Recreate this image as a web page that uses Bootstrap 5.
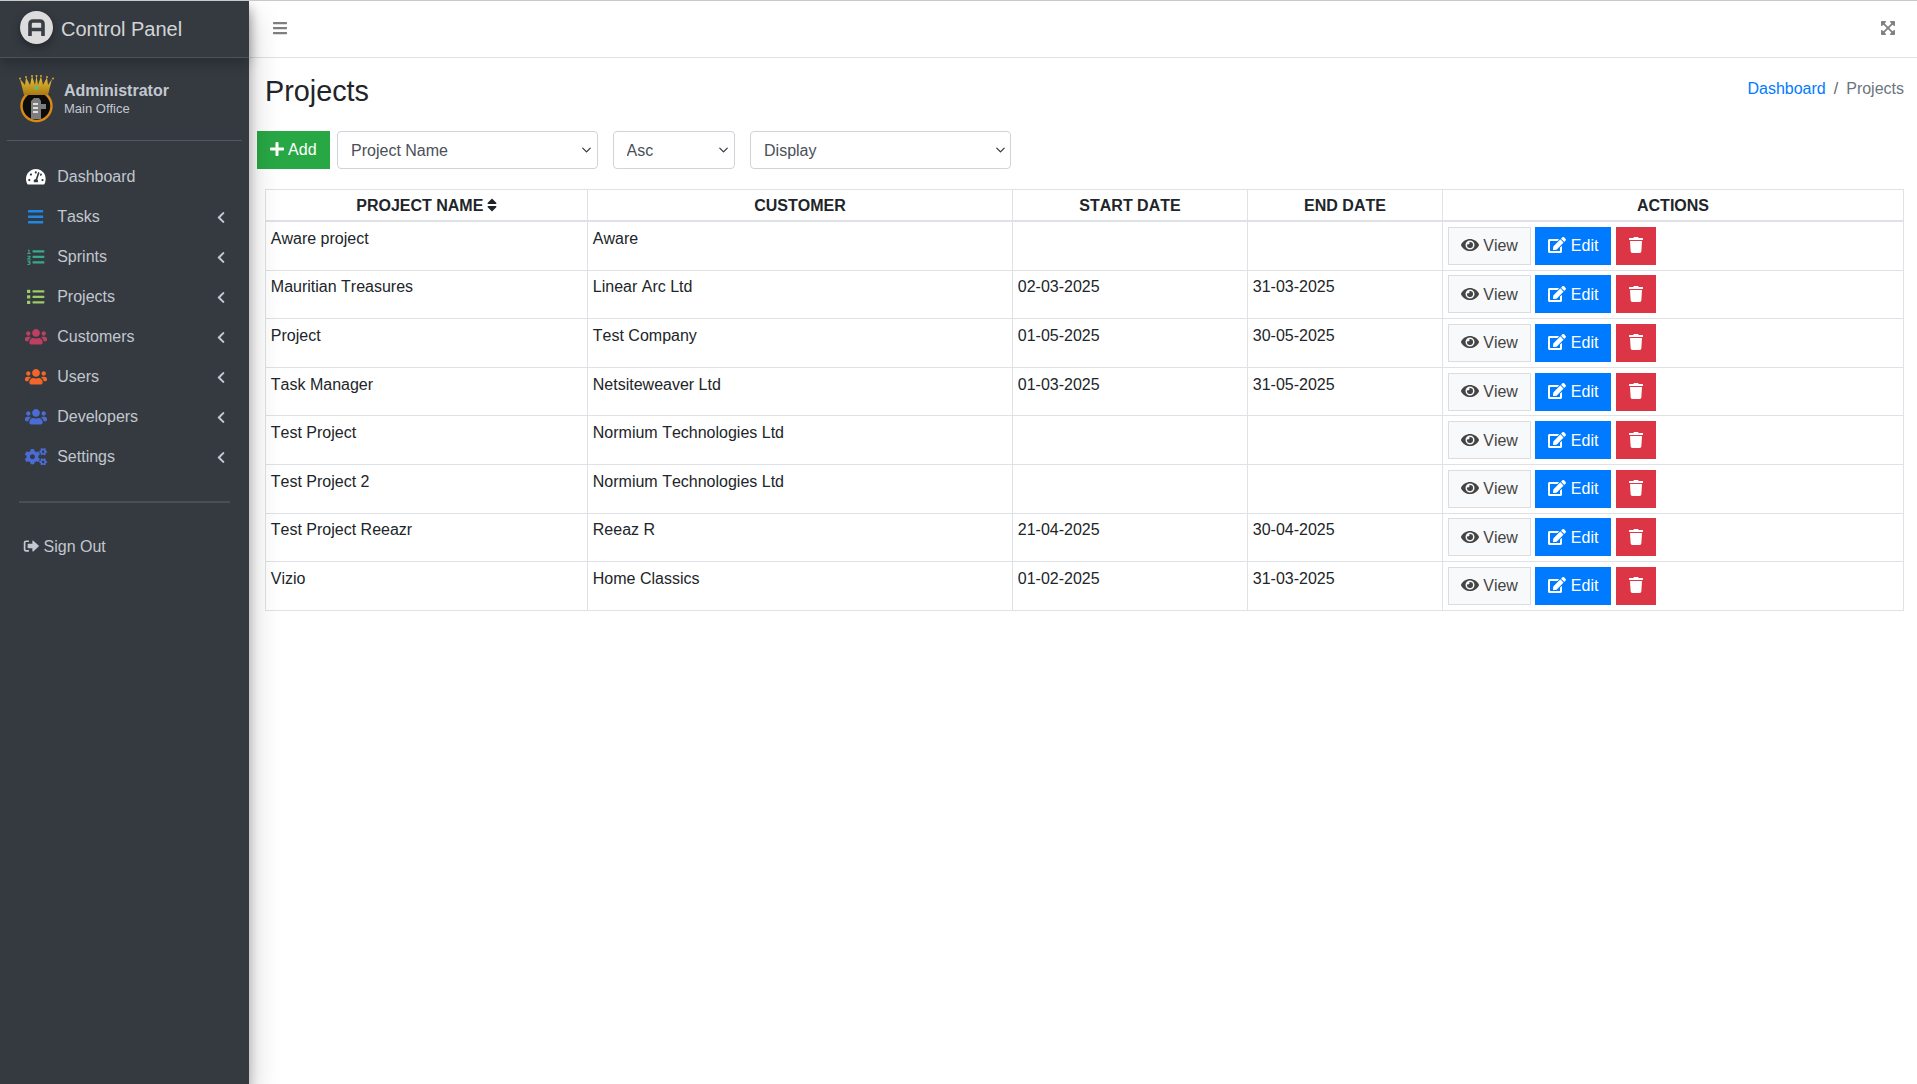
<!DOCTYPE html>
<html lang="en">
<head>
    <meta charset="UTF-8">
    <title>Projects</title>
    <link href="https://cdn.jsdelivr.net/npm/bootstrap@5.3.0/dist/css/bootstrap.min.css" rel="stylesheet">
    <style>
        body {
            font-family: "Liberation Sans", Arial, sans-serif;
            font-size: 16px;
            font-kerning: none;
            color: #212529;
            background: #fff;
            border-top: 1px solid #c9c9c9;
        }
        .ico { height: 1em; fill: currentColor; vertical-align: -.125em; }
        .w320 { width: .625em; }
        .w448 { width: .875em; }
        .w512 { width: 1em; }
        .w576 { width: 1.125em; }
        .w640 { width: 1.25em; }
        .page-shell { height: 1083px; overflow: hidden; }
        .side-panel {
            width: 249px;
            flex: 0 0 249px;
            background: #343a40;
            box-shadow: 0 14px 28px rgba(0,0,0,.25), 0 10px 10px rgba(0,0,0,.22);
            color: #c2c7d0;
            position: relative;
            z-index: 2;
        }
        .side-brand {
            height: 57px;
            border-bottom: 1px solid #4b545c;
            box-shadow: 0 6px 12px rgba(0,0,0,.22);
            padding-left: 20px;
            gap: 8px;
            color: rgba(255,255,255,.8);
            font-size: 20px;
            font-weight: 300;
        }
        .brand-logo { filter: drop-shadow(0 3px 4px rgba(0,0,0,.35)); margin-top: -3px; }
        .side-user {
            margin: 0 7px;
            height: 83px;
            border-bottom: 1px solid #4f5962;
            padding-left: 12px;
            gap: 10px;
        }
        .user-name { font-weight: 700; line-height: 20px; margin-top: -1px; }
        .user-place { font-size: 13px; line-height: 16px; }
        .side-nav { padding-top: 16px; }
        .side-nav .nav-link {
            height: 40px;
            padding: 0 23.5px 0 23px;
            color: #c2c7d0;
        }
        .nav-glyph { width: 26px; margin-right: 8.2px; text-align: center; font-size: 17.6px; line-height: 1; }
        .nav-caret { margin-left: auto; font-size: 13px; color: #c2c7d0; }
        .glyph-white { color: #fff; }
        .glyph-blue { color: #1e88e5; }
        .glyph-teal { color: #39a98a; }
        .glyph-lime { color: #9ccc65; }
        .glyph-rose { color: #bf3f62; }
        .glyph-orange { color: #f4652a; }
        .glyph-indigo { color: #4a6cd4; }
        .side-rule { height: 2px; background: #4b4f54; margin: 24px 19px 0 19px; }
        .side-out { padding: 32px 0 0 23px; color: #c2c7d0; line-height: 24px; }
        .side-out svg { margin-right: 4.5px; }
        .top-bar { height: 57px; border-bottom: 1px solid #dee2e6; padding: 0 22px 2px 24px; }
        .bar-toggle { color: rgba(0,0,0,.5); font-size: 16px; }
        .bar-expand { color: #808080; font-size: 16px; }
        .page-wrap { padding: 0 5.5px 0 8.5px; }
        .page-head { padding: 15.5px 7.5px 0; height: 73px; }
        .page-title { font-size: 28.8px; line-height: 1.2; font-weight: 400; margin: 0; }
        .crumbs { margin: 3px 0 0; padding: 0; }
        .crumbs a { color: #007bff; text-decoration: none; }
        .crumbs .breadcrumb-item.active { color: #6c757d; }
        .tool-row { height: 38px; margin-bottom: 20px; }
        .tool-add { margin-left: -1px; }
        .tool-add svg { margin-right: 1px; }
        .form-select.pick {
            height: 38px;
            padding: 7px 24px 5px 13px;
            font-size: 16px;
            color: #495057;
            border-color: #ced4da;
            border-radius: 4px;
            background-position: right 3.5px center;
            background-size: 13px 10px;
        }
        .pick-wide { width: 260.5px; margin-left: 7.5px; }
        .pick-small { width: 122px; margin-left: 15px; }
        .pick-last { width: 261px; margin-left: 15.5px; }
        .btn.sq { border-radius: 0; }
        .btn-success { --bs-btn-bg: #28a745; --bs-btn-border-color: #28a745; }
        .btn-primary { --bs-btn-bg: #007bff; --bs-btn-border-color: #007bff; }
        .btn-danger { --bs-btn-bg: #dc3545; --bs-btn-border-color: #dc3545; }
        .btn-light { --bs-btn-bg: #f8f9fa; --bs-btn-border-color: #ddd; --bs-btn-color: #444; }
        .tbl-wrap { padding: 0 7.5px; }
        .proj-table { table-layout: fixed; margin: 0; --bs-table-color: #212529; border-color: #dee2e6; }
        .proj-table th { padding: 4px 5px 2px; text-align: center; text-transform: uppercase; border-bottom: 2px solid #dee2e6; }
        .proj-table td { padding: 4.8px; vertical-align: top; }
        .proj-table th svg { margin-left: -1px; }
        .proj-table .btn { padding-top: 6.5px; padding-bottom: 5.5px; }
        .col-name { width: 322px; }
        .col-customer { width: 425px; }
        .col-start { width: 235px; }
        .col-end { width: 195px; }
    </style>
</head>
<body>
<svg width="0" height="0" class="position-absolute">
    <symbol id="i-gauge" viewBox="0 0 576 512"><path d="M288 32C128.94 32 0 160.94 0 320c0 52.8 14.25 102.26 39.06 144.8 5.61 9.62 16.3 15.2 27.44 15.2h443c11.14 0 21.83-5.58 27.44-15.2C561.75 422.26 576 372.8 576 320c0-159.06-128.94-288-288-288zm0 64c14.71 0 26.58 10.13 30.32 23.65-1.11 2.26-2.64 4.23-3.45 6.67l-9.22 27.67c-5.13 3.49-10.97 6.01-17.64 6.01-17.67 0-32-14.33-32-32S270.33 96 288 96zM96 384c-17.67 0-32-14.33-32-32s14.33-32 32-32 32 14.33 32 32-14.33 32-32 32zm48-160c-17.67 0-32-14.33-32-32s14.33-32 32-32 32 14.33 32 32-14.33 32-32 32zm246.77-72.41l-61.33 184C343.13 347.33 352 364.54 352 384c0 11.72-3.38 22.55-8.88 32H232.88c-5.5-9.45-8.88-20.28-8.88-32 0-33.94 26.5-61.43 59.9-63.59l61.34-184.01c4.17-12.56 17.73-19.45 30.36-15.17 12.57 4.19 19.35 17.79 15.17 30.36zm14.66 57.2l15.52-46.55c3.47-1.29 7.13-2.23 11.05-2.23 17.67 0 32 14.33 32 32s-14.33 32-32 32c-11.38-.01-20.89-6.28-26.57-15.22zM480 384c-17.67 0-32-14.33-32-32s14.33-32 32-32 32 14.33 32 32-14.33 32-32 32z"/></symbol>
    <symbol id="i-bars" viewBox="0 0 448 512"><path d="M16 132h416c8.837 0 16-7.163 16-16V76c0-8.837-7.163-16-16-16H16C7.163 60 0 67.163 0 76v40c0 8.837 7.163 16 16 16zm0 160h416c8.837 0 16-7.163 16-16v-40c0-8.837-7.163-16-16-16H16c-8.837 0-16 7.163-16 16v40c0 8.837 7.163 16 16 16zm0 160h416c8.837 0 16-7.163 16-16v-40c0-8.837-7.163-16-16-16H16c-8.837 0-16 7.163-16 16v40c0 8.837 7.163 16 16 16z"/></symbol>
    <symbol id="i-listol" viewBox="0 0 512 512"><path d="M176 64h320a16 16 0 0 1 16 16v32a16 16 0 0 1-16 16H176a16 16 0 0 1-16-16V80a16 16 0 0 1 16-16zm0 160h320a16 16 0 0 1 16 16v32a16 16 0 0 1-16 16H176a16 16 0 0 1-16-16v-32a16 16 0 0 1 16-16zm0 160h320a16 16 0 0 1 16 16v32a16 16 0 0 1-16 16H176a16 16 0 0 1-16-16v-32a16 16 0 0 1 16-16z"/><path d="M30 48h44v100h32v28H8v-28h32V78H24zM10 226h76c16 0 24 10 24 24 0 12-5 22-16 30l-34 24h50v28H8v-24l52-40c6-4 10-8 10-12 0-3-2-4-6-4H10zM10 366h90l4 24-34 26c22 2 38 14 38 36 0 24-20 40-54 40H10v-28h42c14 0 22-4 22-12s-8-12-22-12H32v-22l30-26H10z"/></symbol>
    <symbol id="i-list" viewBox="0 0 512 512"><path d="M80 368H16a16 16 0 0 0-16 16v64a16 16 0 0 0 16 16h64a16 16 0 0 0 16-16v-64a16 16 0 0 0-16-16zm0-320H16A16 16 0 0 0 0 64v64a16 16 0 0 0 16 16h64a16 16 0 0 0 16-16V64a16 16 0 0 0-16-16zm0 160H16a16 16 0 0 0-16 16v64a16 16 0 0 0 16 16h64a16 16 0 0 0 16-16v-64a16 16 0 0 0-16-16zm416 176H176a16 16 0 0 0-16 16v32a16 16 0 0 0 16 16h320a16 16 0 0 0 16-16v-32a16 16 0 0 0-16-16zm0-320H176a16 16 0 0 0-16 16v32a16 16 0 0 0 16 16h320a16 16 0 0 0 16-16V80a16 16 0 0 0-16-16zm0 160H176a16 16 0 0 0-16 16v32a16 16 0 0 0 16 16h320a16 16 0 0 0 16-16v-32a16 16 0 0 0-16-16z"/></symbol>
    <symbol id="i-users" viewBox="0 0 640 512"><path d="M96 224c35.3 0 64-28.7 64-64s-28.7-64-64-64-64 28.7-64 64 28.7 64 64 64zm448 0c35.3 0 64-28.7 64-64s-28.7-64-64-64-64 28.7-64 64 28.7 64 64 64zm32 32h-64c-17.6 0-33.5 7.1-45.1 18.6 40.3 22.1 68.9 62 75.1 109.4h66c17.7 0 32-14.3 32-32v-32c0-35.3-28.7-64-64-64zm-256 0c61.9 0 112-50.1 112-112S381.9 32 320 32 208 82.1 208 144s50.1 112 112 112zm76.8 32h-8.3c-20.8 10-43.9 16-68.5 16s-47.6-6-68.5-16h-8.3C179.6 288 128 339.6 128 403.2V432c0 26.5 21.5 48 48 48h288c26.5 0 48-21.5 48-48v-28.8c0-63.6-51.6-115.2-115.2-115.2zm-223.7-13.4C161.5 263.1 145.6 256 128 256H64c-35.3 0-64 28.7-64 64v32c0 17.7 14.3 32 32 32h65.9c6.3-47.4 34.9-87.3 75.2-109.4z"/></symbol>
    <symbol id="i-cogs" viewBox="0 0 640 512"><path d="M512.1 191l-8.2 14.3c-3 5.3-9.4 7.5-15.1 5.4-11.8-4.4-22.6-10.7-32.1-18.6-4.6-3.8-5.8-10.5-2.8-15.7l8.2-14.3c-6.9-8-12.3-17.3-15.9-27.4h-16.5c-6 0-11.2-4.3-12.2-10.3-2-12-2.1-24.6 0-37.1 1-6 6.2-10.4 12.2-10.4h16.5c3.6-10.1 9-19.4 15.9-27.4l-8.2-14.3c-3-5.2-1.9-11.9 2.8-15.7 9.5-7.9 20.4-14.2 32.1-18.6 5.7-2.1 12.1.1 15.1 5.4l8.2 14.3c10.5-1.9 21.2-1.9 31.7 0L552 6.3c3-5.3 9.4-7.5 15.1-5.4 11.8 4.4 22.6 10.7 32.1 18.6 4.6 3.8 5.8 10.5 2.8 15.7l-8.2 14.3c6.9 8 12.3 17.3 15.9 27.4h16.5c6 0 11.2 4.3 12.2 10.3 2 12 2.1 24.6 0 37.1-1 6-6.2 10.4-12.2 10.4h-16.5c-3.6 10.1-9 19.4-15.9 27.4l8.2 14.3c3 5.2 1.9 11.9-2.8 15.7-9.5 7.9-20.4 14.2-32.1 18.6-5.7 2.1-12.1-.1-15.1-5.4l-8.2-14.3c-10.4 1.9-21.2 1.9-31.7 0zm-10.5-58.8c38.5 29.6 82.4-14.3 52.8-52.8-38.5-29.7-82.4 14.3-52.8 52.8zM386.3 286.1l33.7 16.8c10.1 5.8 14.5 18.1 10.5 29.1-8.9 24.2-26.4 46.4-42.6 65.8-7.4 8.9-20.2 11.1-30.3 5.3l-29.1-16.8c-16 13.7-34.6 24.6-54.9 31.7v33.6c0 11.6-8.3 21.6-19.7 23.6-24.6 4.2-50.4 4.4-75.9 0-11.5-2-20-11.9-20-23.6V418c-20.3-7.2-38.9-18-54.9-31.7L74 403c-10 5.8-22.9 3.6-30.3-5.3-16.2-19.4-33.3-41.6-42.2-65.7-4-10.9.4-23.2 10.5-29.1l33.3-16.8c-3.9-20.9-3.9-42.4 0-63.4L12 205.8c-10.1-5.8-14.6-18.1-10.5-29 8.9-24.2 26-46.4 42.2-65.8 7.4-8.9 20.2-11.1 30.3-5.3l29.1 16.8c16-13.7 34.6-24.6 54.9-31.7V57.1c0-11.5 8.2-21.5 19.6-23.5 24.6-4.2 50.5-4.4 76-.1 11.5 2 20 11.9 20 23.6v33.6c20.3 7.2 38.9 18 54.9 31.7l29.1-16.8c10-5.8 22.9-3.6 30.3 5.3 16.2 19.4 33.2 41.6 42.1 65.8 4 10.9.1 23.2-10 29.1l-33.7 16.8c3.9 21 3.9 42.5 0 63.5zm-117.6 21.1c59.2-77-28.7-164.9-105.7-105.7-59.2 77 28.7 164.9 105.7 105.7zm243.4 182.7l-8.2 14.3c-3 5.3-9.4 7.5-15.1 5.4-11.8-4.4-22.6-10.7-32.1-18.6-4.6-3.8-5.8-10.5-2.8-15.7l8.2-14.3c-6.9-8-12.3-17.3-15.9-27.4h-16.5c-6 0-11.2-4.3-12.2-10.3-2-12-2.1-24.6 0-37.1 1-6 6.2-10.4 12.2-10.4h16.5c3.6-10.1 9-19.4 15.9-27.4l-8.2-14.3c-3-5.2-1.9-11.9 2.8-15.7 9.5-7.9 20.4-14.2 32.1-18.6 5.7-2.1 12.1.1 15.1 5.4l8.2 14.3c10.5-1.9 21.2-1.9 31.7 0l8.2-14.3c3-5.3 9.4-7.5 15.1-5.4 11.8 4.4 22.6 10.7 32.1 18.6 4.6 3.8 5.8 10.5 2.8 15.7l-8.2 14.3c6.9 8 12.3 17.3 15.9 27.4h16.5c6 0 11.2 4.3 12.2 10.3 2 12 2.1 24.6 0 37.1-1 6-6.2 10.4-12.2 10.4h-16.5c-3.6 10.1-9 19.4-15.9 27.4l8.2 14.3c3 5.2 1.9 11.9-2.8 15.7-9.5 7.9-20.4 14.2-32.1 18.6-5.7 2.1-12.1-.1-15.1-5.4l-8.2-14.3c-10.4 1.9-21.2 1.9-31.7 0zM501.6 431c38.5 29.6 82.4-14.3 52.8-52.8-38.5-29.6-82.4 14.3-52.8 52.8z"/></symbol>
    <symbol id="i-left" viewBox="0 0 320 512"><path d="M34.52 239.03L228.87 44.69c9.37-9.37 24.57-9.37 33.94 0l22.67 22.67c9.36 9.36 9.37 24.52.04 33.9L131.49 256l154.02 154.75c9.34 9.38 9.32 24.54-.04 33.9l-22.67 22.67c-9.37 9.37-24.57 9.37-33.94 0L34.52 272.97c-9.37-9.37-9.37-24.57 0-33.94z"/></symbol>
    <symbol id="i-signout" viewBox="0 0 512 512"><path d="M180 76H92c-40 0-68 28-68 68v224c0 40 28 68 68 68h88c6 0 10-4 10-10v-34c0-6-4-10-10-10H100c-14 0-22-8-22-22V152c0-14 8-22 22-22h80c6 0 10-4 10-10V86c0-6-4-10-10-10z"/><path d="M500 240L330 84c-12-11-30-3-30 14v88H168c-12 0-20 8-20 20v100c0 12 8 20 20 20h132v88c0 17 18 25 30 14l170-156c9-8 9-24 0-32z"/></symbol>
    <symbol id="i-expand" viewBox="0 0 448 512"><path d="M448 344v112a23.94 23.94 0 0 1-24 24H312c-21.39 0-32.09-25.9-17-41l36.2-36.2L224 295.6 116.77 402.9 153 439c15.09 15.1 4.39 41-17 41H24a23.94 23.94 0 0 1-24-24V344c0-21.4 25.89-32.1 41-17l36.19 36.2L184.46 256 77.18 148.7 41 185c-15.1 15.1-41 4.4-41-17V56a23.94 23.94 0 0 1 24-24h112c21.39 0 32.09 25.9 17 41l-36.2 36.2L224 216.4l107.23-107.3L295 73c-15.09-15.1-4.39-41 17-41h112a23.94 23.94 0 0 1 24 24v112c0 21.4-25.89 32.1-41 17l-36.19-36.2L263.54 256l107.28 107.3L407 327.1c15.1-15.2 41-4.5 41 16.9z"/></symbol>
    <symbol id="i-plus" viewBox="0 0 448 512"><path d="M416 208H272V64c0-17.67-14.33-32-32-32h-32c-17.67 0-32 14.33-32 32v144H32c-17.67 0-32 14.33-32 32v32c0 17.67 14.33 32 32 32h144v144c0 17.67 14.33 32 32 32h32c17.67 0 32-14.33 32-32V304h144c17.67 0 32-14.33 32-32v-32c0-17.67-14.33-32-32-32z"/></symbol>
    <symbol id="i-sort" viewBox="0 0 320 512"><path d="M41 288h238c21.4 0 32.1 25.9 17 41L177 448c-9.4 9.4-24.6 9.4-33.9 0L24 329c-15.1-15.1-4.4-41 17-41zm255-105L177 64c-9.4-9.4-24.6-9.4-33.9 0L24 183c-15.1 15.1-4.4 41 17 41h238c21.4 0 32.1-25.9 17-41z"/></symbol>
    <symbol id="i-eye" viewBox="0 0 576 512"><path d="M572.52 241.4C518.29 135.59 410.93 64 288 64S57.68 135.64 3.48 241.41a32.35 32.35 0 0 0 0 29.19C57.71 376.41 165.07 448 288 448s230.32-71.64 284.52-177.41a32.35 32.35 0 0 0 0-29.19zM288 400a144 144 0 1 1 144-144 143.93 143.93 0 0 1-144 144zm0-240a95.31 95.31 0 0 0-25.31 3.79 47.85 47.85 0 0 1-66.9 66.9A95.78 95.78 0 1 0 288 160z"/></symbol>
    <symbol id="i-edit" viewBox="0 0 576 512"><path d="M402.6 83.2l90.2 90.2c3.8 3.8 3.8 10 0 13.8L274.4 405.6l-92.8 10.3c-12.4 1.4-22.9-9.1-21.5-21.5l10.3-92.8L388.8 83.2c3.8-3.8 10-3.8 13.8 0zm162-22.9l-48.8-48.8c-15.2-15.2-39.9-15.2-55.2 0l-35.4 35.4c-3.8 3.8-3.8 10 0 13.8l90.2 90.2c3.8 3.8 10 3.8 13.8 0l35.4-35.4c15.2-15.3 15.2-40 0-55.2zM384 346.2V448H64V128h229.8c3.2 0 6.2-1.3 8.5-3.5l40-40c7.6-7.6 2.2-20.5-8.5-20.5H48C21.5 64 0 85.5 0 112v352c0 26.5 21.5 48 48 48h352c26.5 0 48-21.5 48-48V306.2c0-10.7-12.9-16-20.5-8.5l-40 40c-2.2 2.3-3.5 5.3-3.5 8.5z"/></symbol>
    <symbol id="i-trash" viewBox="0 0 448 512"><path d="M432 32H312l-9.4-18.7A24 24 0 0 0 281.1 0H166.8a23.72 23.72 0 0 0-21.4 13.3L136 32H16A16 16 0 0 0 0 48v32a16 16 0 0 0 16 16h416a16 16 0 0 0 16-16V48a16 16 0 0 0-16-16zM53.2 467a48 48 0 0 0 47.9 45h245.8a48 48 0 0 0 47.9-45L416 128H32z"/></symbol>
</svg>

<div class="d-flex page-shell">
    <aside class="side-panel">
        <div class="side-brand d-flex align-items-center">
            <svg class="brand-logo" width="33" height="33" viewBox="0 0 33 33">
                <circle cx="16.5" cy="16.5" r="16.5" fill="#dcdcdc"/>
                <path d="M10 25V13Q10 10 13 10H20Q23 10 23 13V25M10 18.500H23" fill="none" stroke="#3a3f45" stroke-width="3.6"/>
            </svg>
            <span>Control Panel</span>
        </div>
        <div class="side-user d-flex align-items-center">
            <svg width="35" height="48" viewBox="0 0 35 48" class="flex-shrink-0">
                <defs>
                    <linearGradient id="crownFill" x1="0" y1="0" x2="0" y2="1">
                        <stop offset="0" stop-color="#f0c43a"/>
                        <stop offset="1" stop-color="#a97a12"/>
                    </linearGradient>
                </defs>
                <circle cx="17.500" cy="31" r="15" fill="#0c0c0c" stroke="#d98a14" stroke-width="2.400"/>
                <path d="M12 44V26l3-3h5l2 3v3h5v5h-5v10z" fill="#7d7d7d"/>
                <path d="M14 28h5v2h-5zm0 4h5v2h-5zm0 4h5v2h-5z" fill="#dedede"/>
                <path d="M5 20L1 4l5 6 1-7.500 4 7.500 2-9 3 9 1.500-9.500L19 10l3-8.500 2 8.500 4-7.500 1 7.500 4-6-4 16z" fill="url(#crownFill)"/>
                <g fill="#d9a82a"><circle cx="1" cy="3.500" r="1"/><circle cx="7" cy="2" r="1"/><circle cx="13" cy="1" r="1"/><circle cx="17.500" cy="0.900" r="1"/><circle cx="22" cy="1" r="1"/><circle cx="28" cy="2" r="1"/><circle cx="34" cy="3.500" r="1"/></g>
                <circle cx="17.500" cy="13" r="1.800" fill="#2fd1a0"/>
            </svg>
            <div>
                <div class="user-name">Administrator</div>
                <div class="user-place">Main Office</div>
            </div>
        </div>
        <nav class="nav flex-column side-nav">
            <a class="nav-link d-flex align-items-center" href="#"><span class="nav-glyph glyph-white"><svg class="ico w576"><use href="#i-gauge"/></svg></span>Dashboard</a>
            <a class="nav-link d-flex align-items-center" href="#"><span class="nav-glyph glyph-blue"><svg class="ico w448"><use href="#i-bars"/></svg></span>Tasks<svg class="ico w320 nav-caret"><use href="#i-left"/></svg></a>
            <a class="nav-link d-flex align-items-center" href="#"><span class="nav-glyph glyph-teal"><svg class="ico w512"><use href="#i-listol"/></svg></span>Sprints<svg class="ico w320 nav-caret"><use href="#i-left"/></svg></a>
            <a class="nav-link d-flex align-items-center" href="#"><span class="nav-glyph glyph-lime"><svg class="ico w512"><use href="#i-list"/></svg></span>Projects<svg class="ico w320 nav-caret"><use href="#i-left"/></svg></a>
            <a class="nav-link d-flex align-items-center" href="#"><span class="nav-glyph glyph-rose"><svg class="ico w640"><use href="#i-users"/></svg></span>Customers<svg class="ico w320 nav-caret"><use href="#i-left"/></svg></a>
            <a class="nav-link d-flex align-items-center" href="#"><span class="nav-glyph glyph-orange"><svg class="ico w640"><use href="#i-users"/></svg></span>Users<svg class="ico w320 nav-caret"><use href="#i-left"/></svg></a>
            <a class="nav-link d-flex align-items-center" href="#"><span class="nav-glyph glyph-indigo"><svg class="ico w640"><use href="#i-users"/></svg></span>Developers<svg class="ico w320 nav-caret"><use href="#i-left"/></svg></a>
            <a class="nav-link d-flex align-items-center" href="#"><span class="nav-glyph glyph-indigo"><svg class="ico w640"><use href="#i-cogs"/></svg></span>Settings<svg class="ico w320 nav-caret"><use href="#i-left"/></svg></a>
        </nav>
        <div class="side-rule"></div>
        <div class="side-out"><svg class="ico w512"><use href="#i-signout"/></svg>Sign Out</div>
    </aside>

    <div class="flex-grow-1">
        <header class="top-bar d-flex align-items-center justify-content-between">
            <svg class="ico w448 bar-toggle"><use href="#i-bars"/></svg>
            <svg class="ico w448 bar-expand"><use href="#i-expand"/></svg>
        </header>
        <main class="page-wrap">
            <div class="page-head d-flex justify-content-between align-items-start">
                <h1 class="page-title">Projects</h1>
                <ol class="breadcrumb crumbs">
                    <li class="breadcrumb-item"><a href="#">Dashboard</a></li>
                    <li class="breadcrumb-item active">Projects</li>
                </ol>
            </div>
            <div class="tool-row d-flex">
                <button class="btn btn-success sq tool-add"><svg class="ico w448"><use href="#i-plus"/></svg> Add</button>
                <select class="form-select pick pick-wide"><option>Project Name</option></select>
                <select class="form-select pick pick-small"><option>Asc</option></select>
                <select class="form-select pick pick-last"><option>Display</option></select>
            </div>
            <div class="tbl-wrap">
                <table class="table table-bordered proj-table">
                    <thead>
                        <tr>
                            <th class="col-name">Project Name <svg class="ico w320"><use href="#i-sort"/></svg></th>
                            <th class="col-customer">Customer</th>
                            <th class="col-start">Start Date</th>
                            <th class="col-end">End Date</th>
                            <th>Actions</th>
                        </tr>
                    </thead>
                    <tbody id="projectRows"></tbody>
                </table>
            </div>
        </main>
    </div>
</div>

<script>
    const projects = [
        ['Aware project', 'Aware', '', ''],
        ['Mauritian Treasures', 'Linear Arc Ltd', '02-03-2025', '31-03-2025'],
        ['Project', 'Test Company', '01-05-2025', '30-05-2025'],
        ['Task Manager', 'Netsiteweaver Ltd', '01-03-2025', '31-05-2025'],
        ['Test Project', 'Normium Technologies Ltd', '', ''],
        ['Test Project 2', 'Normium Technologies Ltd', '', ''],
        ['Test Project Reeazr', 'Reeaz R', '21-04-2025', '30-04-2025'],
        ['Vizio', 'Home Classics', '01-02-2025', '31-03-2025']
    ];

    const actions = `
        <a class="btn btn-light sq" href="#"><svg class="ico w576"><use href="#i-eye"/></svg> View</a>
        <a class="btn btn-primary sq" href="#"><svg class="ico w576"><use href="#i-edit"/></svg> Edit</a>
        <a class="btn btn-danger sq" href="#"><svg class="ico w448"><use href="#i-trash"/></svg></a>`;

    document.getElementById('projectRows').innerHTML = projects.map(p => `
        <tr><td>${p[0]}</td><td>${p[1]}</td><td>${p[2]}</td><td>${p[3]}</td><td>${actions}</td></tr>
    `).join('');
</script>
<script src="https://cdn.jsdelivr.net/npm/bootstrap@5.3.0/dist/js/bootstrap.bundle.min.js"></script>
</body>
</html>
